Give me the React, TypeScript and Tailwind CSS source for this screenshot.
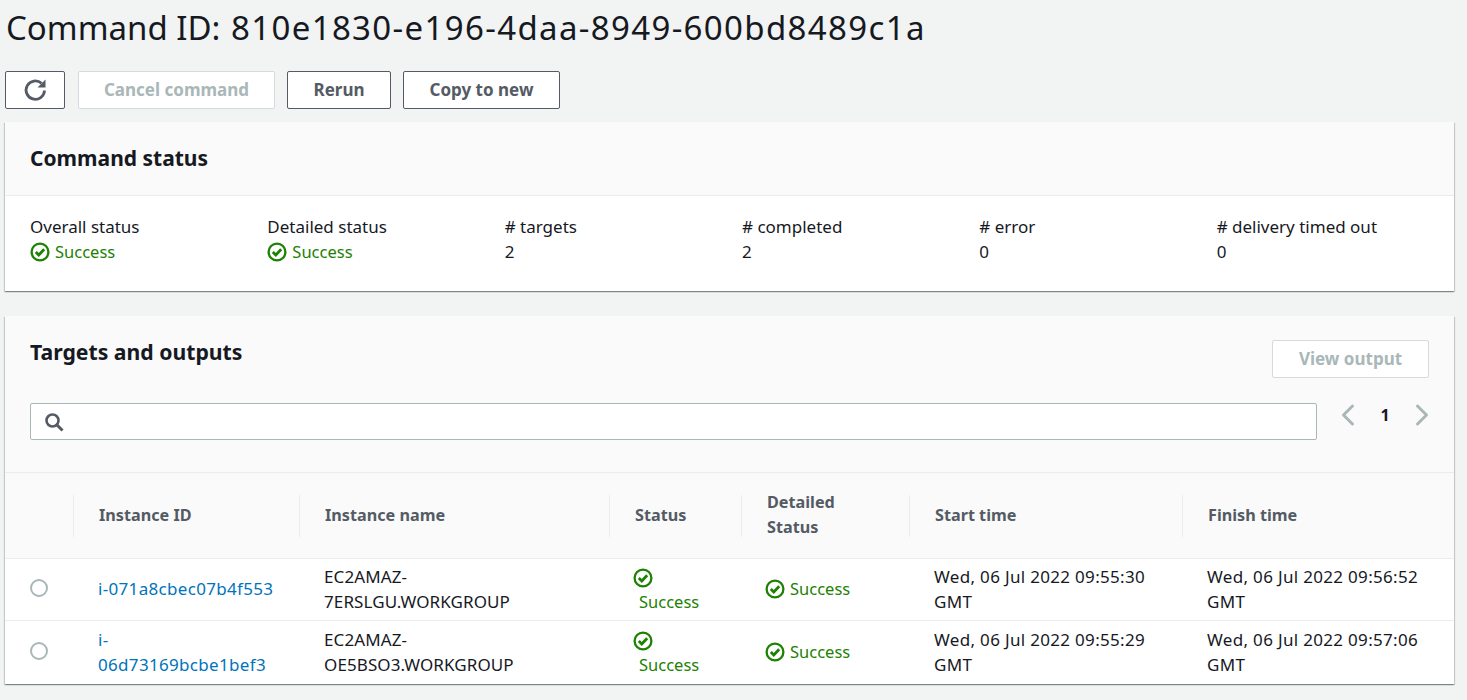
import React from 'react';
import { ChevronLeft, ChevronRight } from 'lucide-react';

const Check = () => (
  <svg width="20" height="20" viewBox="0 0 20 20" fill="none" className="shrink-0">
    <circle cx="10" cy="10" r="8.4" stroke="#1d8102" strokeWidth="2.3" />
    <path d="M5.8 10l3 3 5.4-5.8" stroke="#1d8102" strokeWidth="2.8" />
  </svg>
);

const Success = () => (
  <span className="inline-flex items-center gap-[5px] text-[#1d8102]">
    <Check />
    <span className="text-[16.5px]">Success</span>
  </span>
);

const summary = [
  { label: 'Overall status', value: <Success /> },
  { label: 'Detailed status', value: <Success /> },
  { label: '# targets', value: '2' },
  { label: '# completed', value: '2' },
  { label: '# error', value: '0' },
  { label: '# delivery timed out', value: '0' },
];

const rows = [
  {
    id: ['i-071a8cbec07b4f553'],
    name: ['EC2AMAZ-', '7ERSLGU.WORKGROUP'],
    start: 'Wed, 06 Jul 2022 09:55:30',
    finish: 'Wed, 06 Jul 2022 09:56:52',
  },
  {
    id: ['i-', '06d73169bcbe1bef3'],
    name: ['EC2AMAZ-', 'OE5BSO3.WORKGROUP'],
    start: 'Wed, 06 Jul 2022 09:55:29',
    finish: 'Wed, 06 Jul 2022 09:57:06',
  },
];

const grid = 'grid grid-cols-[68px_226px_310px_132px_168px_273px_272px]';
const btn = 'h-[38px] rounded-[2px] border bg-white pb-[1px] font-bold text-[17px]';
const card =
  'mx-[5px] w-[1449px] bg-white shadow-[0_1px_1px_0_rgba(0,28,36,0.3),1px_1px_1px_0_rgba(0,28,36,0.15),-1px_1px_1px_0_rgba(0,28,36,0.15)]';

const Head = ({ children }: { children: React.ReactNode }) => (
  <div className="flex items-center py-[17px]">
    <div className="flex h-[42px] w-full items-center border-l border-[#eaeded] pl-[25px] text-[16.2px] leading-[25px] font-bold text-[#545b64]">
      <div>{children}</div>
    </div>
  </div>
);

export default function App() {
  return (
    <div className="min-h-[700px] bg-[#f2f3f3] font-['Noto_Sans',sans-serif] text-[17px] leading-[25px] text-[#16191f]">
      <h1 className="pl-[6px] pt-[5px] text-[33px] leading-[46px] text-[#16191f]">
        Command ID: <span className="ml-[2px] tracking-[1.35px]">810e1830-e196-4daa-8949-600bd8489c1a</span>
      </h1>

      <div className="flex gap-[12px] pl-[5px] pt-[20px]">
        <button className={`${btn} mr-[1px] flex w-[60px] items-center justify-center border-[#545b64] text-[#545b64]`}>
          <svg width="24" height="24" viewBox="0 0 24 24" fill="none" stroke="currentColor" strokeWidth="2.8">
            <path d="M21.5 12.5a9.2 9.2 0 1 1-3-7.2" />
            <path d="M22.5 1.5v8h-8z" fill="currentColor" strokeWidth="0" />
          </svg>
        </button>
        <button className={`${btn} w-[197px] border-[#d5dbdb] text-[#aab7b8]`}>Cancel command</button>
        <button className={`${btn} w-[104px] border-[#545b64] text-[#545b64]`}>Rerun</button>
        <button className={`${btn} w-[157px] border-[#545b64] text-[#545b64]`}>Copy to new</button>
      </div>

      <section className={`${card} mt-[13px]`}>
        <div className="flex h-[74px] items-center border-b border-[#eaeded] bg-[#fafafa] pl-[25px]">
          <h2 className="text-[21px] font-bold">Command status</h2>
        </div>
        <div className="grid h-[95px] grid-cols-6 content-start pl-[25px] pt-[18px]">
          {summary.map((s) => (
            <div key={s.label}>
              <div>{s.label}</div>
              <div className="h-[25px]">{s.value}</div>
            </div>
          ))}
        </div>
      </section>

      <section className={`${card} mt-[25px]`}>
        <div className="h-[157px] border-b border-[#eaeded] bg-[#fafafa] px-[25px]">
          <div className="flex justify-between pt-[21px]">
            <h2 className="pt-[2px] text-[21.2px] font-bold">Targets and outputs</h2>
            <button className={`${btn} mt-[3px] w-[157px] border-[#d5dbdb] text-[#aab7b8]`}>View output</button>
          </div>
          <div className="mt-[25px] flex items-start">
            <div className="flex h-[37px] w-[1287px] items-center rounded-[2px] border border-[#aab7b8] bg-white pl-[13px] text-[#545b64]">
              <svg width="20" height="20" viewBox="0 0 20 20" fill="none" stroke="currentColor" strokeWidth="2.6">
                <circle cx="8.5" cy="8.5" r="6" />
                <path d="M13 13l5.5 5.5" strokeWidth="3" />
              </svg>
            </div>
            <div className="-mt-[6px] flex w-[112px] items-center justify-between text-[#aab7b8]">
              <ChevronLeft size={36} strokeWidth={2} className="ml-[13px]" />
              <span className="text-[16px] font-bold text-[#16191f]">1</span>
              <ChevronRight size={36} strokeWidth={2} className="-mr-[11px]" />
            </div>
          </div>
        </div>

        <div className={`${grid} h-[86px] border-b border-[#eaeded] bg-[#fafafa]`}>
          <div />
          <Head>Instance ID</Head>
          <Head>Instance name</Head>
          <Head>Status</Head>
          <Head>
            <div className="pb-[2px]">
              Detailed
              <br />
              Status
            </div>
          </Head>
          <Head>Start time</Head>
          <Head>Finish time</Head>
        </div>

        {rows.map((r, i) => (
          <div
            key={r.start}
            className={`${grid} items-center ${i === 0 ? 'h-[62px] border-b border-[#eaeded]' : 'h-[63px]'}`}
          >
            <div className="-mt-[3px] pl-[25px]">
              <div className="h-[18px] w-[18px] rounded-full border-2 border-[#aab7b8] bg-white" />
            </div>
            <div className="pb-[2px] pl-[25px] tracking-[0.32px] text-[#0073bb]">
              {r.id.map((t) => (
                <div key={t}>{t}</div>
              ))}
            </div>
            <div className="pb-[2px] pl-[25px] tracking-[0.1px]">
              {r.name.map((t) => (
                <div key={t}>{t}</div>
              ))}
            </div>
            <div className="pl-[24px] text-[#1d8102]">
              <div className="flex h-[25px] items-center">
                <Check />
              </div>
              <div className="-mt-[1px] pl-[6px] text-[16.5px]">Success</div>
            </div>
            <div className="pb-[1px] pl-[24px] pt-[3px]">
              <Success />
            </div>
            <div className="pb-[2px] pl-[25px] tracking-[0.32px]">
              <div>{r.start}</div>
              <div>GMT</div>
            </div>
            <div className="pb-[2px] pl-[25px] tracking-[0.32px]">
              <div>{r.finish}</div>
              <div>GMT</div>
            </div>
          </div>
        ))}
      </section>
    </div>
  );
}
